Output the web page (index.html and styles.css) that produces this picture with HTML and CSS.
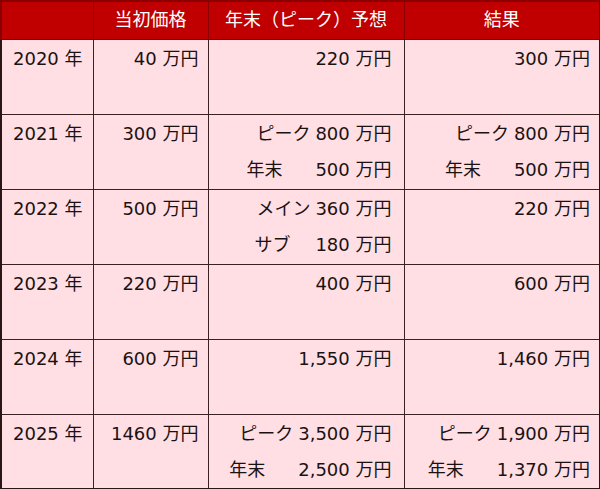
FILE: index.html
```html
<!DOCTYPE html>
<html lang="ja">
<head>
<meta charset="utf-8">
<link rel="stylesheet" href="styles.css">
</head>
<body>
<table class="tbl">
  <colgroup>
    <col class="c1"><col class="c2"><col class="c3"><col class="c4">
  </colgroup>
  <thead>
    <tr class="head">
      <th></th>
      <th>当初価格</th>
      <th>年末（ピーク）予想</th>
      <th>結果</th>
    </tr>
  </thead>
  <tbody>
    <tr>
      <td class="year">2020 年</td>
      <td class="num"><div class="line">40 万円</div></td>
      <td class="num mid"><div class="line">220 万円</div></td>
      <td class="num"><div class="line">300 万円</div></td>
    </tr>
    <tr>
      <td class="year">2021 年</td>
      <td class="num"><div class="line">300 万円</div></td>
      <td class="num mid">
        <div class="line"><span class="lbl">ピーク</span><span>800 万円</span></div>
        <div class="line"><span class="lbl w2">年末</span><span>500 万円</span></div>
      </td>
      <td class="num">
        <div class="line"><span class="lbl">ピーク</span><span>800 万円</span></div>
        <div class="line"><span class="lbl w2">年末</span><span>500 万円</span></div>
      </td>
    </tr>
    <tr>
      <td class="year">2022 年</td>
      <td class="num"><div class="line">500 万円</div></td>
      <td class="num mid">
        <div class="line"><span class="lbl">メイン</span><span>360 万円</span></div>
        <div class="line"><span class="lbl w3">サブ</span><span>180 万円</span></div>
      </td>
      <td class="num"><div class="line">220 万円</div></td>
    </tr>
    <tr>
      <td class="year">2023 年</td>
      <td class="num"><div class="line">220 万円</div></td>
      <td class="num mid"><div class="line">400 万円</div></td>
      <td class="num"><div class="line">600 万円</div></td>
    </tr>
    <tr>
      <td class="year">2024 年</td>
      <td class="num"><div class="line">600 万円</div></td>
      <td class="num mid"><div class="line">1,550 万円</div></td>
      <td class="num"><div class="line">1,460 万円</div></td>
    </tr>
    <tr>
      <td class="year">2025 年</td>
      <td class="num"><div class="line">1460 万円</div></td>
      <td class="num mid">
        <div class="line"><span class="lbl">ピーク</span><span>3,500 万円</span></div>
        <div class="line"><span class="lbl w2">年末</span><span>2,500 万円</span></div>
      </td>
      <td class="num">
        <div class="line"><span class="lbl">ピーク</span><span>1,900 万円</span></div>
        <div class="line"><span class="lbl w2">年末</span><span>1,370 万円</span></div>
      </td>
    </tr>
  </tbody>
</table>
</body>
</html>
```
FILE: styles.css
```css
html, body {
  margin: 0;
  padding: 0;
  background: #ffffff;
}
body {
  font-family: "DejaVu Sans", "Noto Sans CJK JP", sans-serif;
  font-size: 18px;
  color: #1a1212;
}
.tbl {
  border-collapse: collapse;
  table-layout: fixed;
  width: 599px;
}
.c1 { width: 92px; }
.c2 { width: 115px; }
.c3 { width: 196px; }
.c4 { width: 196px; }

.head th {
  background: #c00000;
  color: #ffffff;
  font-weight: normal;
  height: 38px;
  padding: 0;
  font-size: 18px;
  text-align: center;
  vertical-align: middle;
  border: 1px solid #8a0000;
  border-top: 2px solid #8a0000;
  box-sizing: border-box;
  line-height: 36px;
}
.head th:first-child { border-left: 2px solid #8a0000; }
.head th:last-child { border-right: 2px solid #8a0000; }

tbody td {
  background: #ffdfe3;
  border: 1px solid #3a2222;
  height: 75px;
  padding: 1px 9px 0 10px;
  vertical-align: top;
  box-sizing: border-box;
  line-height: 36px;
}
tbody td:first-child { border-left: 2px solid #2a1616; }
tbody td:last-child { border-right: 2px solid #2a1616; }
tbody tr:last-child td { border-bottom: 2px solid #2a1616; }

.year { text-align: left; padding-left: 11px; }
.num { text-align: right; }
.mid { padding-right: 12px; }
.line {
  display: flex;
  justify-content: flex-end;
  white-space: nowrap;
}
.lbl { margin-right: 5px; text-align: left; }
.w2 { width: 64px; }
.w3 { width: 56px; }
```
